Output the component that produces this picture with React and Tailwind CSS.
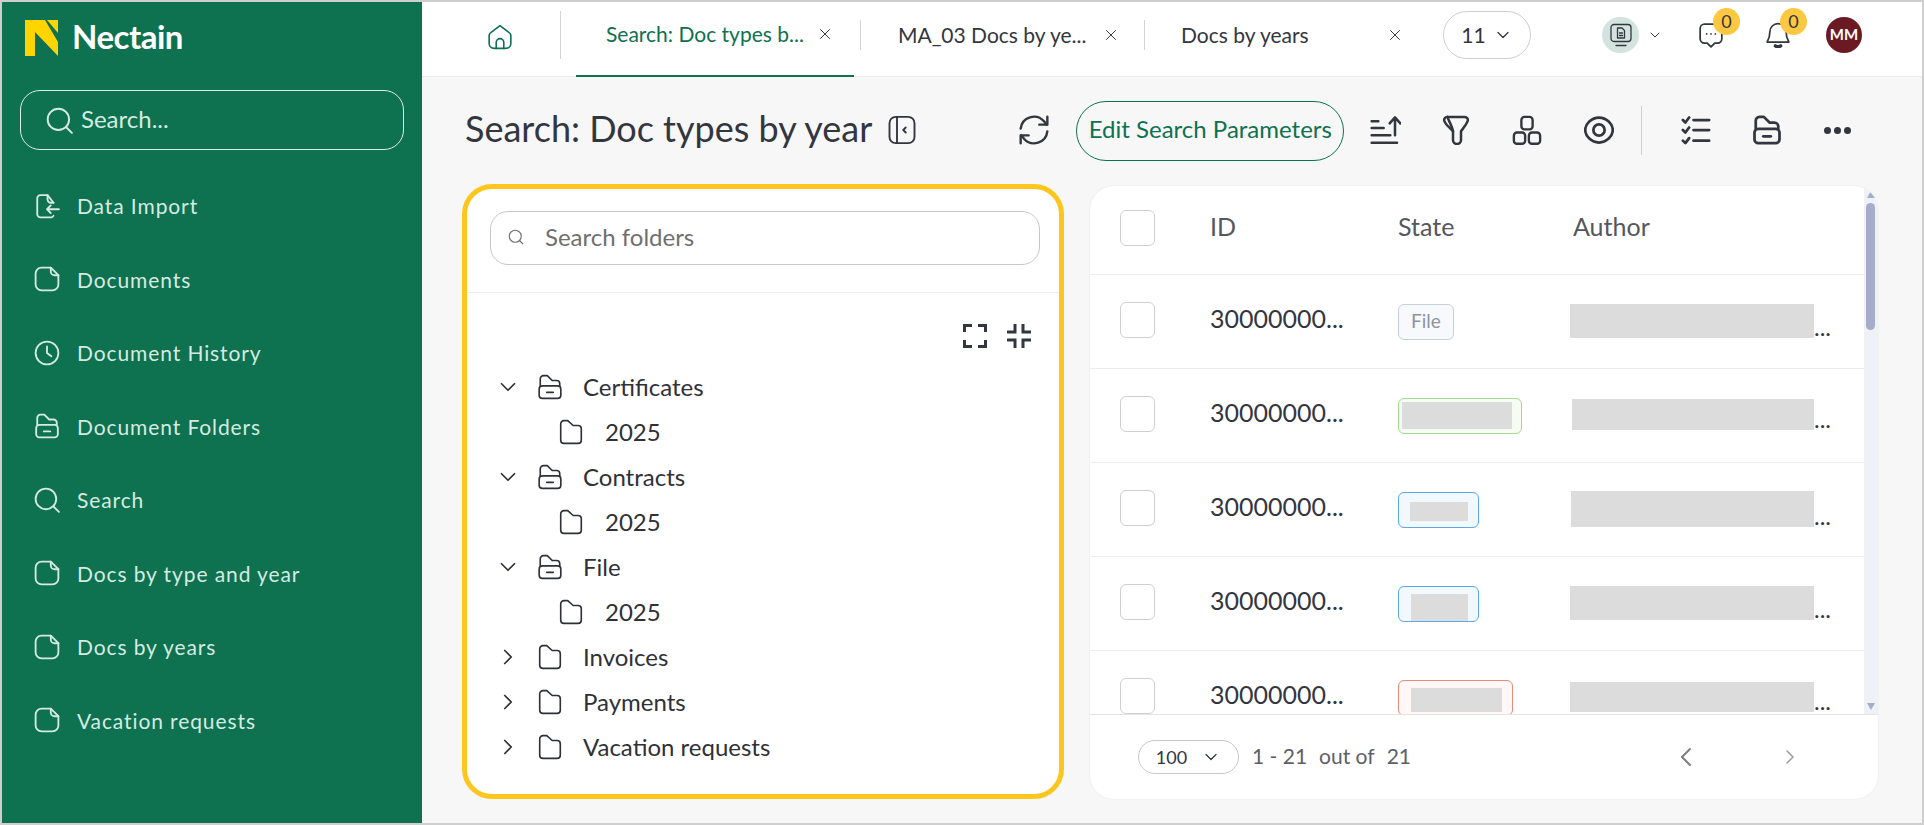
import React from 'react';
import { ChevronDown, ChevronRight, ChevronLeft, X, Search } from 'lucide-react';

const Stroke = ({ size = 26, w = 2, className = '', children, box = 24 }) => (
  <svg width={size} height={size} viewBox={`0 0 ${box} ${box}`} fill="none" stroke="currentColor" strokeWidth={w} strokeLinecap="round" strokeLinejoin="round" className={className}>
    {children}
  </svg>
);

const DocIcon = (p) => (
  <Stroke {...p}>
    <path d="M7 1.5h8.5l7 7V17a5.5 5.5 0 0 1-5.5 5.5H7A5.5 5.5 0 0 1 1.500 17V7A5.500 5.500 0 0 1 7 1.500z" />
    <path d="M15.500 1.500V5a3.500 3.500 0 0 0 3.500 3.500h3.500" />
  </Stroke>
);
const ImportIcon = (p) => (
  <Stroke {...p}>
    <path d="M18 9 12.500 2H6a3 3 0 0 0-3 3v14.500a3 3 0 0 0 3 3h10a2.500 2.500 0 0 0 2-1.500" />
    <path d="M12.500 2v4a3 3 0 0 0 3 3H18" />
    <path d="M23 15H12M15.500 11.500 12 15l3.500 3.500" />
  </Stroke>
);
const ClockIcon = (p) => (
  <Stroke {...p}>
    <circle cx="12" cy="12" r="10.500" />
    <path d="M12 6v6l4 3" />
  </Stroke>
);
const FolderMinusIcon = (p) => (
  <Stroke {...p}>
    <path d="M3 11V4.500A3 3 0 0 1 6 1.500h3.500L14 6h4a3 3 0 0 1 3 3v2" />
    <rect x="2" y="11" width="20" height="11.500" rx="3" />
    <path d="M9 17h6" />
  </Stroke>
);
const FolderIcon = (p) => (
  <Stroke {...p}>
    <path d="M2.500 4.500a3 3 0 0 1 3-3h3.500L14 6h4.500a3 3 0 0 1 3 3v10.500a3 3 0 0 1-3 3h-13a3 3 0 0 1-3-3z" />
  </Stroke>
);
const SearchLine = (p) => (
  <Stroke {...p}>
    <circle cx="11" cy="11" r="9.500" />
    <path d="m18 18 5 5" />
  </Stroke>
);
const HomeIcon = (p) => (
  <Stroke {...p}>
    <path d="M12 1.500 3.500 8A3 3 0 0 0 2 10.500V18a4.500 4.500 0 0 0 4.500 4.500h11A4.500 4.500 0 0 0 22 18v-7.500A3 3 0 0 0 20.500 8z" />
    <path d="M8.500 22.500V17a3.500 3.500 0 0 1 7 0v5.500" />
  </Stroke>
);
const PanelIcon = (p) => (
  <Stroke {...p}>
    <rect x="2" y="1.500" width="20" height="21" rx="5" />
    <path d="M8 1.500v21M15 10l-2 2 2 2" />
  </Stroke>
);
const RefreshIcon = (p) => (
  <Stroke {...p}>
    <path d="M2 11a10 10 0 0 1 17.500-5.500l2 2.500M22 13a10 10 0 0 1-17.500 5.500L2.500 16" />
    <path d="M22 2v6h-6M2 22v-6h6" />
  </Stroke>
);
const SortIcon = (p) => (
  <Stroke {...p}>
    <path d="M2 21.500h19M2 16h14M2 10.500h9M2 5.500h5M19.500 16V3M15.500 7l4-4.500 4 4.500" />
  </Stroke>
);
const FilterIcon = (p) => (
  <Stroke {...p}>
    <path d="M5 1.500h14a2.500 2.500 0 0 1 2.300 3.400c-1.200 3.300-3.800 6-5.300 8.100V20a3.200 3.200 0 0 1-6.400 0v-7C8.100 11 3.900 8.200 2.700 4.900A2.500 2.500 0 0 1 5 1.500z" />
    <path d="M5 1.500c1.500 3.500 4 8 4.600 11.500" />
  </Stroke>
);
const BlocksIcon = (p) => (
  <Stroke {...p}>
    <rect x="7.500" y="1.500" width="9" height="10" rx="2.500" />
    <rect x="1.500" y="14" width="9" height="9" rx="2.500" />
    <rect x="13.500" y="14" width="9" height="9" rx="2.500" />
  </Stroke>
);
const EyeIcon = (p) => (
  <Stroke {...p}>
    <path d="M12 2c6 0 11 5 11 10s-5 10-11 10S1 17 1 12 6 2 12 2z" />
    <circle cx="12" cy="12" r="4.500" />
  </Stroke>
);
const CheckListIcon = (p) => (
  <Stroke {...p}>
    <path d="M10 4h12.500M10 12h12.500M10 20.500h12.500M1.500 4l2 2 3-4M1.500 12l2 2 3-4M1.500 20.500l2 2 3-4" />
  </Stroke>
);
const ChatIcon = (p) => (
  <Stroke {...p}>
    <path d="M6 2h12a4 4 0 0 1 4 4v9.500a4 4 0 0 1-4 4h-2.500L12 23l-3.500-3.500H6a4 4 0 0 1-4-4V6a4 4 0 0 1 4-4z" />
    <path d="M8 11h.01M12 11h.01M16 11h.01" />
  </Stroke>
);
const BellIcon = (p) => (
  <Stroke {...p}>
    <path d="M12 1.500A7.500 7.500 0 0 0 4.500 9c0 5-1 7-2.500 9.500h20C20.500 16 19.500 14 19.500 9A7.500 7.500 0 0 0 12 1.500z" />
    <path d="M9.500 22c1.500 1 3.500 1 5 0" strokeWidth="3" />
  </Stroke>
);
const MonitorDocIcon = (p) => (
  <Stroke {...p}>
    <rect x="2" y="1.500" width="20" height="17" rx="3" />
    <path d="M7 22.500h10M8.500 5h4.500l2.500 2.500V15h-7zM10.500 10h3M10.500 12.500h3" />
  </Stroke>
);

const Corners = ({ inward }) => (
  <svg width="24" height="24" viewBox="0 0 24 24" fill="none" stroke="#33363f" strokeWidth="3">
    {inward ? (
      <path d="M8 0v8H0M16 0v8h8M8 24v-8H0M16 24v-8h8" />
    ) : (
      <path d="M9 1.500H1.500V8M15 1.500h7.500V8M9 22.500H1.500V16M15 22.500h7.500V16" />
    )}
  </svg>
);

const NAV = [
  ['Data Import', ImportIcon],
  ['Documents', DocIcon],
  ['Document History', ClockIcon],
  ['Document Folders', FolderMinusIcon],
  ['Search', SearchLine],
  ['Docs by type and year', DocIcon],
  ['Docs by years', DocIcon],
  ['Vacation requests', DocIcon],
];

const TREE = [
  { name: 'Certificates', open: true },
  { name: '2025', child: true },
  { name: 'Contracts', open: true },
  { name: '2025', child: true },
  { name: 'File', open: true },
  { name: '2025', child: true },
  { name: 'Invoices' },
  { name: 'Payments' },
  { name: 'Vacation requests' },
];

// grey boxes stand for the blanked-out values in each row
const ROWS = [
  { tag: 'border-[#c9cedb] bg-[#f8f9fc] w-[56px] h-[36px] justify-center', label: 'File', authorW: 'w-[244px]', authorH: 'h-[34px]' },
  { tag: 'border-[#a5d98f] bg-[#f6fcf2] w-[124px] h-[36px] pl-[3px] pt-[3px]', grey: 'w-[110px] h-[27px]', authorW: 'w-[242px]', authorH: 'h-[31px]' },
  { tag: 'border-[#5aa9e6] bg-[#f1f8fe] w-[81px] h-[36px] pl-[11px] pt-[9px]', grey: 'w-[58px] h-[19px]', authorW: 'w-[243px]', authorH: 'h-[36px]' },
  { tag: 'border-[#5aa9e6] bg-[#f1f8fe] w-[81px] h-[36px] pl-[12px] pt-[7px]', grey: 'w-[57px] h-[27px]', authorW: 'w-[246px]', authorH: 'h-[34px]' },
  { tag: 'border-[#e98a7c] bg-[#fff8f6] w-[115px] h-[36px] pl-[12px] pt-[7px]', grey: 'w-[91px] h-[24px]', authorW: 'w-[246px]', authorH: 'h-[30px]' },
];

function Sidebar() {
  return (
    <aside className="flex h-full w-[420px] shrink-0 flex-col bg-[#0e7150] px-[18px] pt-[17px]">
      <div className="flex h-[38px] items-center pl-[5px]">
        <svg width="33" height="36" viewBox="0 0 33 36" fill="#ffd400">
          <path d="M0 0h20l13 22v14L10 12v24H0z" />
          <path d="M22 0h11v13z" />
        </svg>
        <span className="ml-[14px] pb-[3px] text-[33px] font-bold leading-none tracking-[-0.5px] text-white">Nectain</span>
      </div>
      <div className="mt-[33px] flex h-[60px] items-center rounded-[20px] border border-[#dcefe6] pl-[25px] text-[24px] text-[#d5ebe1]">
        <SearchLine size={27} w={1.700} />
        <span className="ml-[8px] pb-[2px]">Search...</span>
      </div>
      <nav className="mt-[19px] flex flex-col">
        {NAV.map(([label, Icon]) => (
          <div key={label} className="flex h-[73.500px] items-center pl-[14px] text-[#d5ebe1]">
            <Icon size={26} w={1.700} />
            <span className="ml-[17px] text-[21px] tracking-[0.9px]">{label}</span>
          </div>
        ))}
      </nav>
    </aside>
  );
}

function TopBar() {
  return (
    <header className="flex h-[75px] shrink-0 items-center border-b border-[#ececec] bg-white pb-[9px] text-[21px] text-[#33363f]">
      <div className="flex h-[48px] w-[139px] items-center justify-center border-r border-[#d4d4d4] pl-[17px] pt-[4px] text-[#0e7150]">
        <HomeIcon size={26} w={1.500} />
      </div>
      <div className="ml-[15px] flex h-[75px] w-[278px] items-center self-start border-b-2 border-[#0e7150] pb-[9px] pl-[30px] text-[#0e7150]">
        Search: Doc types b...
        <X size={18} strokeWidth={1.300} className="ml-[12px] text-[#33363f]" />
      </div>
      <div className="ml-[6px] h-[30px] w-px bg-[#d4d4d4]" />
      <div className="flex w-[283px] items-center whitespace-nowrap pl-[37px]">
        MA_03 Docs by ye...
        <X size={18} strokeWidth={1.300} className="ml-[16px]" />
      </div>
      <div className="h-[30px] w-px bg-[#d4d4d4]" />
      <div className="flex w-[262px] items-center whitespace-nowrap pl-[36px]">
        Docs by years
        <X size={18} strokeWidth={1.300} className="ml-[77px]" />
      </div>
      <div className="ml-[36px] flex h-[48px] w-[88px] items-center justify-center gap-[7px] rounded-[24px] border border-[#cfcfcf]">
        11
        <ChevronDown size={20} strokeWidth={1.500} />
      </div>
      <div className="ml-[71px] flex h-[36px] w-[37px] items-center justify-center rounded-full bg-[#d3e4df]">
        <MonitorDocIcon size={24} w={1.300} />
      </div>
      <ChevronDown size={16} strokeWidth={1.500} className="ml-[8px]" />
      <div className="relative ml-[35px]">
        <ChatIcon size={26} w={1.600} />
        <span className="absolute -right-[16px] -top-[14px] flex h-[27px] w-[27px] items-center justify-center rounded-full bg-[#fdc841] text-[18px]">0</span>
      </div>
      <div className="relative ml-[41px]">
        <BellIcon size={26} w={1.600} />
        <span className="absolute -right-[16px] -top-[14px] flex h-[27px] w-[27px] items-center justify-center rounded-full bg-[#fdc841] text-[18px]">0</span>
      </div>
      <div className="ml-[35px] flex h-[36px] w-[36px] items-center justify-center rounded-full bg-[#6b1a23] text-[15px] font-bold text-white">MM</div>
    </header>
  );
}

function Toolbar() {
  return (
    <div className="flex h-[60px] items-center pb-[2px] text-[#33363f]">
      <h1 className="ml-[3px] pb-[5px] text-[36px] leading-none">Search: Doc types by year</h1>
      <PanelIcon size={30} w={1.500} className="ml-[15px]" />
      <RefreshIcon size={32} w={1.800} className="ml-[101px]" />
      <button className="ml-[26px] h-[60px] w-[268px] self-start rounded-[30px] border border-[#0e7150] pb-[4px] text-[24px] text-[#0e7150]">Edit Search Parameters</button>
      <SortIcon size={32} w={1.900} className="ml-[25px]" />
      <FilterIcon size={30} w={2} className="ml-[40px]" />
      <BlocksIcon size={30} w={1.900} className="ml-[41px]" />
      <EyeIcon size={30} w={2.200} className="ml-[42px]" />
      <div className="ml-[27px] h-[49px] w-px bg-[#cfcfcf]" />
      <CheckListIcon size={30} w={2.200} className="ml-[39px]" />
      <FolderMinusIcon size={30} w={2.200} className="ml-[41px]" />
      <div className="ml-[42px] flex gap-[3px]">
        <span className="h-[7px] w-[7px] rounded-full bg-[#33363f]" />
        <span className="h-[7px] w-[7px] rounded-full bg-[#33363f]" />
        <span className="h-[7px] w-[7px] rounded-full bg-[#33363f]" />
      </div>
    </div>
  );
}

function FolderPanel() {
  return (
    <section className="h-[615px] w-[602px] shrink-0 rounded-[30px] border-[5px] border-[#fdc61e] bg-white">
      <div className="h-[104px] border-b border-[#ececec] pl-[23px] pr-[19px] pt-[22px]">
        <div className="flex h-[54px] items-center rounded-[18px] border border-[#c8c8c8] pb-[3px] pl-[16px] text-[24px] text-[#6f6f6f]">
          <Search size={18} strokeWidth={1.500} />
          <span className="ml-[20px]">Search folders</span>
        </div>
      </div>
      <div className="flex justify-end gap-[20px] pr-[28px] pt-[31px]">
        <Corners />
        <Corners inward />
      </div>
      <div className="mt-[16px] flex flex-col text-[24px] text-[#2f3139]">
        {TREE.map((n, i) => (
          <div key={i} className={`flex h-[45px] items-center ${n.child ? 'pl-[91px]' : 'pl-[28px]'}`}>
            {!n.child && (n.open ? <ChevronDown size={26} strokeWidth={1.600} /> : <ChevronRight size={26} strokeWidth={1.600} />)}
            {n.open ? (
              <FolderMinusIcon size={26} w={1.500} className="ml-[16px]" />
            ) : (
              <FolderIcon size={26} w={1.500} className={n.child ? '' : 'ml-[16px]'} />
            )}
            <span className={n.child ? 'ml-[21px]' : 'ml-[20px]'}>{n.name}</span>
          </div>
        ))}
      </div>
    </section>
  );
}

function Checkbox() {
  return <div className="h-[36px] w-[35px] shrink-0 rounded-[6px] border border-[#cfcfcf]" />;
}

function TablePanel() {
  return (
    <section className="ml-[26px] flex h-[613px] w-[788px] flex-col overflow-hidden rounded-[24px] bg-white shadow-[0_0_2px_#e4e4e4]">
      <div className="flex min-h-0 flex-1">
        <div className="min-w-0 flex-1 overflow-hidden">
          <div className="flex h-[89px] items-center border-b border-[#ececec] pb-[4px] pl-[30px] text-[25px] text-[#55575e]">
            <Checkbox />
            <span className="ml-[55px] w-[188px] pb-[2px]">ID</span>
            <span className="w-[175px] pb-[2px]">State</span>
            <span className="pb-[2px]">Author</span>
          </div>
          {ROWS.map((r, i) => (
            <div key={i} className="flex h-[94px] shrink-0 items-center border-b border-[#ececec] pb-[4px] pl-[30px] text-[25px] text-[#33363f]">
              <Checkbox />
              <span className="ml-[55px] w-[188px] pb-[2px]">30000000...</span>
              <div className="w-[172px] pt-[4px]">
                <div className={`flex rounded-[6px] border text-[19px] text-[#8d93a3] ${r.tag}`}>
                  {r.label ? <span className="self-center">{r.label}</span> : <div className={`bg-[#dcdcdc] ${r.grey}`} />}
                </div>
              </div>
              <div className="flex w-[260px] items-end justify-end pt-[2px]">
                <div className={`bg-[#dcdcdc] ${r.authorW} ${r.authorH}`} />
                <span className="w-[16px] text-[24px] leading-[22px]">...</span>
              </div>
            </div>
          ))}
        </div>
        <div className="relative w-[14px] shrink-0 bg-[#eff1f6]">
          <span className="absolute left-[3px] top-[5px] h-0 w-0 border-x-[4px] border-b-[7px] border-x-transparent border-b-[#a5adcb]" />
          <div className="absolute left-[2px] top-[17px] h-[127px] w-[9px] rounded-full bg-[#a5adcb]" />
          <span className="absolute bottom-[4px] left-[3px] h-0 w-0 border-x-[4px] border-t-[7px] border-x-transparent border-t-[#a5adcb]" />
        </div>
      </div>
      <div className="flex h-[85px] shrink-0 items-center border-t border-[#e4e4e4] pl-[48px] text-[21px] text-[#5e6068]">
        <div className="flex h-[34px] w-[101px] items-center justify-center gap-[14px] rounded-[17px] border border-[#c8c8c8] text-[18px] text-[#33363f]">
          100
          <ChevronDown size={20} strokeWidth={1.500} />
        </div>
        <span className="ml-[13px] pb-[2px]">1 - 21</span>
        <span className="ml-[12px] pb-[2px]">out of</span>
        <span className="ml-[12px] pb-[2px]">21</span>
        <ChevronLeft size={32} strokeWidth={1.500} className="ml-[259px] text-[#7d7d7d]" />
        <ChevronRight size={24} strokeWidth={1.500} className="ml-[76px] text-[#9a9a9a]" />
      </div>
    </section>
  );
}

export default function App() {
  return (
    <div className="flex h-[825px] w-full overflow-hidden border-2 border-[#cfcfcf] bg-[#f7f7f7] font-[Lato,sans-serif]">
      <Sidebar />
      <div className="flex min-w-0 flex-1 flex-col">
        <TopBar />
        <main className="px-[40px] pt-[24px]">
          <Toolbar />
          <div className="mt-[23px] flex items-start">
            <FolderPanel />
            <div className="pt-[2px]">
              <TablePanel />
            </div>
          </div>
        </main>
      </div>
    </div>
  );
}
